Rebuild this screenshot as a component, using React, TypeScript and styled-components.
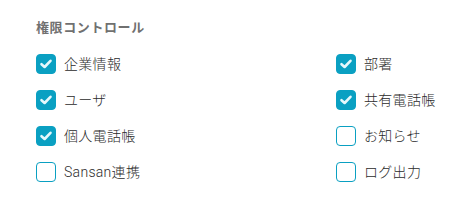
import React, { useState } from "react";
import styled, { createGlobalStyle } from "styled-components";

const GlobalStyle = createGlobalStyle`
  body {
    margin: 0;
    background: #ffffff;
    font-family: "Noto Sans CJK JP", "Noto Sans", sans-serif;
  }
`;

const Wrapper = styled.div`
  padding: 18px 36px;
`;

const Title = styled.div`
  font-size: 13px;
  line-height: 18px;
  font-weight: 700;
  color: #707070;
  letter-spacing: 0.6px;
`;

const Grid = styled.div`
  display: grid;
  grid-template-columns: 300px 1fr;
  grid-auto-rows: 36px;
  margin-top: 10px;
`;

const Item = styled.label`
  display: flex;
  align-items: center;
  gap: 8px;
  cursor: pointer;
  font-family: "Roboto", "Noto Sans CJK JP", sans-serif;
  font-size: 14px;
  font-weight: 300;
  color: #2b2b2b;
  letter-spacing: 0.3px;
`;

const Box = styled.span<{ $checked: boolean }>`
  width: 20px;
  height: 20px;
  box-sizing: border-box;
  border-radius: 4px;
  border: 1.5px solid #0aa0c2;
  background: ${(p) => (p.$checked ? "#0aa0c2" : "#ffffff")};
  display: flex;
  align-items: center;
  justify-content: center;
  flex-shrink: 0;
`;

const Label = styled.span`
  line-height: 20px;
`;

interface IPerm {
  label: string;
  checked: boolean;
}

const initial: IPerm[] = [
  { label: "企業情報", checked: true },
  { label: "部署", checked: true },
  { label: "ユーザ", checked: true },
  { label: "共有電話帳", checked: true },
  { label: "個人電話帳", checked: true },
  { label: "お知らせ", checked: false },
  { label: "Sansan連携", checked: false },
  { label: "ログ出力", checked: false },
];

const App = () => {
  const [perms, setPerms] = useState(initial);

  const toggle = (idx: number) => {
    const next = [...perms];
    next[idx] = { ...next[idx], checked: !next[idx].checked };
    setPerms(next);
  };

  return (
    <Wrapper>
      <GlobalStyle />
      <Title>権限コントロール</Title>
      <Grid>
        {perms.map((p, i) => (
          <Item key={p.label} onClick={() => toggle(i)}>
            <Box $checked={p.checked}>
              {p.checked && (
                <svg width="14" height="14" viewBox="0 0 14 14">
                  <path
                    d="M2.5 7.2 L5.6 10 L11.5 3.8"
                    fill="none"
                    stroke="#e6f8fc"
                    strokeWidth="2.6"
                    strokeLinecap="round"
                    strokeLinejoin="round"
                  />
                </svg>
              )}
            </Box>
            <Label>{p.label}</Label>
          </Item>
        ))}
      </Grid>
    </Wrapper>
  );
};

export default App;
